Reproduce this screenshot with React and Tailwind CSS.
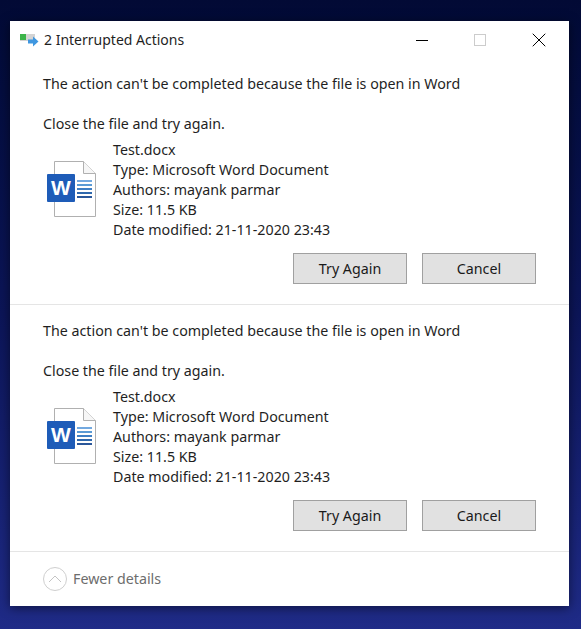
import React from 'react';
import { X } from 'lucide-react';

const meta = ['Type: Microsoft Word Document', 'Authors: mayank parmar', 'Size: 11.5 KB', 'Date modified: 21-11-2020 23:43'];

const WordFileIcon = () => (
  <svg width="50" height="58" viewBox="0 0 50 58" className="shrink-0">
    <path d="M7.5 .5H36.5L48.5 12.5V55.5H7.5Z" fill="#fff" stroke="#b0b0b0" />
    <path d="M36.5 .5V12.5H48.5" fill="#f6f6f6" stroke="#b0b0b0" />
    <rect x="0" y="13" width="28" height="28" rx="1" fill="#1e5cb8" />
    <text x="14" y="34" textAnchor="middle" fill="#fff" fontSize="21" fontWeight="700" fontFamily="Liberation Sans, sans-serif">W</text>
    <rect x="30" y="19" width="15" height="2" fill="#73a9e0" />
    <rect x="30" y="23" width="15" height="2" fill="#5b9bd5" />
    <rect x="30" y="27" width="15" height="2" fill="#3f7fc4" />
    <rect x="30" y="31" width="15" height="2" fill="#2f68ad" />
    <rect x="30" y="35" width="15" height="2" fill="#2b579a" />
  </svg>
);

const TitleIcon = () => (
  <svg width="20" height="16" viewBox="0 0 20 16" className="shrink-0">
    <rect x="0" y="2" width="15" height="7" fill="#d4d4d4" />
    <rect x="0" y="2" width="6" height="6" fill="#3cb44a" />
    <path d="M8 7.5H13V4.5L18.5 9.5L13 14.5V11.5H8Z" fill="#3f97e0" />
  </svg>
);

const Action = () => (
  <section className="px-[33px]">
    <p className="h-5 leading-5">The action can't be completed because the file is open in Word</p>
    <p className="mt-5 h-5 leading-5">Close the file and try again.</p>
    <div className="mt-[6px] flex">
      <div className="w-[70px] pl-[4px] pt-[21px]">
        <WordFileIcon />
      </div>
      <div className="leading-5">
        <div>Test.docx</div>
        {meta.map((line) => (
          <div key={line}>{line}</div>
        ))}
      </div>
    </div>
    <div className="mt-[13px] flex justify-end gap-[15px]">
      <button className="h-[31px] w-[114px] border border-[#a0a0a0] bg-[#e1e1e1] text-[#1a1a1a]">Try Again</button>
      <button className="h-[31px] w-[114px] border border-[#a0a0a0] bg-[#e1e1e1] text-[#1a1a1a]">Cancel</button>
    </div>
  </section>
);

export default function App() {
  return (
    <div className="h-[629px] w-[581px] overflow-hidden bg-gradient-to-b from-[#020a35] via-[#0c1558] to-[#1f2b87] px-[10px] pt-[21px] font-['Noto_Sans',sans-serif] text-[14.25px] text-[#1f1f1f]">
      <div className="h-[585px] w-[559px] bg-white shadow-[0_2px_10px_rgba(0,0,0,0.5)]">
        <header className="flex h-[38px] items-center pl-[10px]">
          <TitleIcon />
          <span className="ml-[4px] mb-[2px] flex-1 text-[14px]">2 Interrupted Actions</span>
          <div className="h-px w-3 bg-black" />
          <div className="ml-[46px] h-3 w-3 border border-[#cccccc]" />
          <X size={24} strokeWidth={1} className="ml-[41px] mr-[18px] text-black" />
        </header>
        <div className="pt-[15px]">
          <Action />
        </div>
        <div className="mt-5 border-t border-[#e5e5e5] pt-[16px]">
          <Action />
        </div>
        <footer className="mt-5 flex h-[54px] items-center border-t border-[#e5e5e5] pl-[33px]">
          <div className="flex h-6 w-6 items-center justify-center rounded-full border border-[#cfcfcf]">
            <svg width="14" height="8" viewBox="0 0 14 8"><path d="M1 7L7 1L13 7" fill="none" stroke="#c4c4c4" /></svg>
          </div>
          <span className="ml-[6px] text-[#6d6d6d]">Fewer details</span>
        </footer>
      </div>
    </div>
  );
}
